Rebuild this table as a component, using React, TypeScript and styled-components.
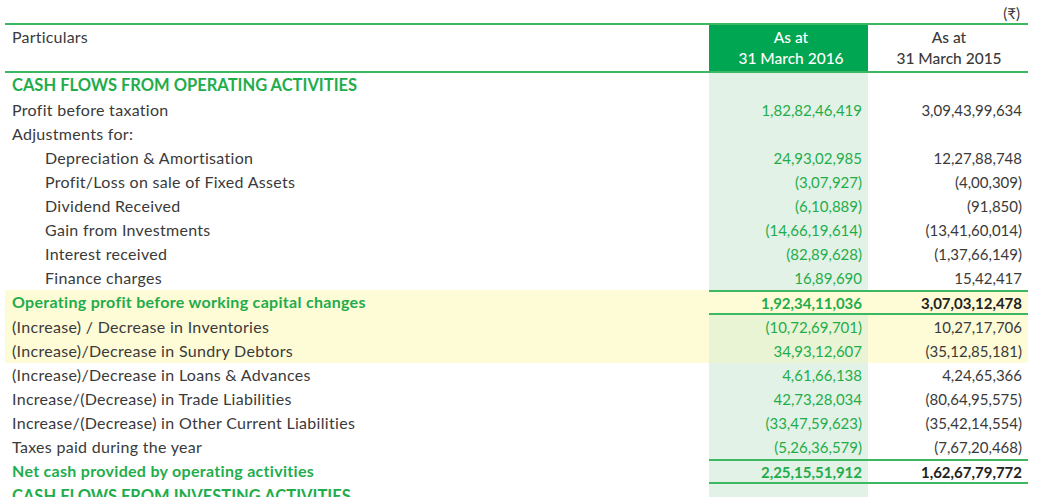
import React from 'react';
import styled, { createGlobalStyle, css } from 'styled-components';

const GREEN = '#00a651';
const LINE = '#3cb862';
const TEXT = '#3a3a3a';
const GTEXT = '#1fad4c';
const COL = '#e2f2e6';
const YEL = '#fefbd7';
const YELCOL = '#e8f4d3';

const GlobalStyle = createGlobalStyle`
  html, body { margin: 0; padding: 0; background: #fff; }
  body { font-family: Lato, "Open Sans", sans-serif; color: ${TEXT}; }
`;

type Tone = 'plain' | 'total' | 'mark';

const Page = styled.div`
  width: 1023px;
  padding-left: 5px;
  height: 497px;
  overflow: hidden;
`;

const CurrencyNote = styled.div`
  height: 23px;
  line-height: 26px;
  text-align: right;
  padding-right: 8px;
  font-size: 15px;
`;

const Grid = styled.div`
  display: grid;
  grid-template-columns: 704px 159px 160px;
`;

const HeaderRow = styled(Grid)`
  height: 50px;
  box-sizing: border-box;
  border-top: 2px solid ${LINE};
  border-bottom: 2px solid ${LINE};
`;

const HeaderLabel = styled.div`
  padding-left: 7px;
  line-height: 23px;
  font-size: 16px;
  letter-spacing: 0.2px;
`;

const HeaderYear = styled.div<{ $current?: boolean }>`
  display: flex;
  flex-direction: column;
  align-items: center;
  padding-top: 2px;
  padding-left: ${(p) => (p.$current ? '5px' : '2px')};
  font-size: 15.5px;
  line-height: 21px;
  font-weight: 500;
  ${(p) =>
    p.$current
      ? css`
          background: ${GREEN};
          color: #fff;
        `
      : css`
          color: ${TEXT};
        `}
`;

const Row = styled(Grid)<{ $height?: number }>`
  height: ${(p) => p.$height ?? 24}px;
`;

const Label = styled.div<{ $indent?: boolean; $green?: boolean; $title?: boolean; $tone: Tone }>`
  display: flex;
  align-items: center;
  box-sizing: border-box;
  padding-bottom: 2px;
  padding-left: ${(p) => (p.$indent ? 40 : 7)}px;
  font-size: ${(p) => (p.$title ? 16.5 : 16)}px;
  letter-spacing: ${(p) => (p.$title ? 0 : 0.3)}px;
  font-weight: ${(p) => (p.$green ? 700 : 400)};
  color: ${(p) => (p.$green ? GTEXT : TEXT)};
  white-space: nowrap;
  background: ${(p) => (p.$tone === 'plain' ? 'transparent' : YEL)};
`;

const Value = styled.div<{ $current?: boolean; $tone: Tone; $bold?: boolean; $fill?: boolean }>`
  display: flex;
  align-items: center;
  justify-content: flex-end;
  box-sizing: border-box;
  padding-right: 6px;
  font-size: 15px;
  white-space: nowrap;
  font-weight: ${(p) => (p.$bold ? 700 : 400)};
  color: ${(p) => (p.$current ? GTEXT : p.$bold ? '#222' : TEXT)};
  background: ${(p) => {
    if (p.$tone === 'mark') return p.$current ? YELCOL : YEL;
    if (p.$fill) return YEL;
    return p.$current ? COL : 'transparent';
  }};
  ${(p) =>
    p.$tone === 'total' &&
    css`
      border-top: 2px solid ${LINE};
      border-bottom: 2px solid ${LINE};
    `}
`;

type Line = {
  label: string;
  a?: string;
  b?: string;
  indent?: boolean;
  green?: boolean;
  title?: boolean;
  tone?: Tone;
  yellowTotal?: boolean;
  height?: number;
};

const lines: Line[] = [
  { label: 'CASH FLOWS FROM OPERATING ACTIVITIES', green: true, title: true, height: 25 },
  { label: 'Profit before taxation', a: '1,82,82,46,419', b: '3,09,43,99,634' },
  { label: 'Adjustments for:' },
  { label: 'Depreciation & Amortisation', a: '24,93,02,985', b: '12,27,88,748', indent: true },
  { label: 'Profit/Loss on sale of Fixed Assets', a: '(3,07,927)', b: '(4,00,309)', indent: true },
  { label: 'Dividend Received', a: '(6,10,889)', b: '(91,850)', indent: true },
  { label: 'Gain from Investments', a: '(14,66,19,614)', b: '(13,41,60,014)', indent: true },
  { label: 'Interest received', a: '(82,89,628)', b: '(1,37,66,149)', indent: true },
  { label: 'Finance charges', a: '16,89,690', b: '15,42,417', indent: true },
  { label: 'Operating profit before working capital changes', a: '1,92,34,11,036', b: '3,07,03,12,478', green: true, tone: 'total', yellowTotal: true, height: 25 },
  { label: '(Increase) / Decrease in Inventories', a: '(10,72,69,701)', b: '10,27,17,706', tone: 'mark' },
  { label: '(Increase)/Decrease in Sundry Debtors', a: '34,93,12,607', b: '(35,12,85,181)', tone: 'mark' },
  { label: '(Increase)/Decrease in Loans & Advances', a: '4,61,66,138', b: '4,24,65,366' },
  { label: 'Increase/(Decrease) in Trade Liabilities', a: '42,73,28,034', b: '(80,64,95,575)' },
  { label: 'Increase/(Decrease) in Other Current Liabilities', a: '(33,47,59,623)', b: '(35,42,14,554)' },
  { label: 'Taxes paid during the year', a: '(5,26,36,579)', b: '(7,67,20,468)' },
  { label: 'Net cash provided by operating activities', a: '2,25,15,51,912', b: '1,62,67,79,772', green: true, tone: 'total', height: 25 },
  { label: 'CASH FLOWS FROM INVESTING ACTIVITIES', green: true, title: true, height: 25 },
];

export default function App() {
  return (
    <>
      <GlobalStyle />
      <Page>
        <CurrencyNote>(₹)</CurrencyNote>
        <HeaderRow>
          <HeaderLabel>Particulars</HeaderLabel>
          <HeaderYear $current>
            <span>As at</span>
            <span>31 March 2016</span>
          </HeaderYear>
          <HeaderYear>
            <span>As at</span>
            <span>31 March 2015</span>
          </HeaderYear>
        </HeaderRow>
        {lines.map((l, i) => {
          const tone: Tone = l.tone ?? 'plain';
          const labelTone: Tone = tone === 'total' && !l.yellowTotal ? 'plain' : tone;
          const bold = tone === 'total';
          return (
            <Row key={i} $height={l.height}>
              <Label $indent={l.indent} $green={l.green} $title={l.title} $tone={labelTone}>
                {l.label}
              </Label>
              <Value $current $tone={tone} $bold={bold} $fill={l.yellowTotal}>
                {l.a}
              </Value>
              <Value $tone={tone} $bold={bold} $fill={l.yellowTotal}>
                {l.b}
              </Value>
            </Row>
          );
        })}
      </Page>
    </>
  );
}
